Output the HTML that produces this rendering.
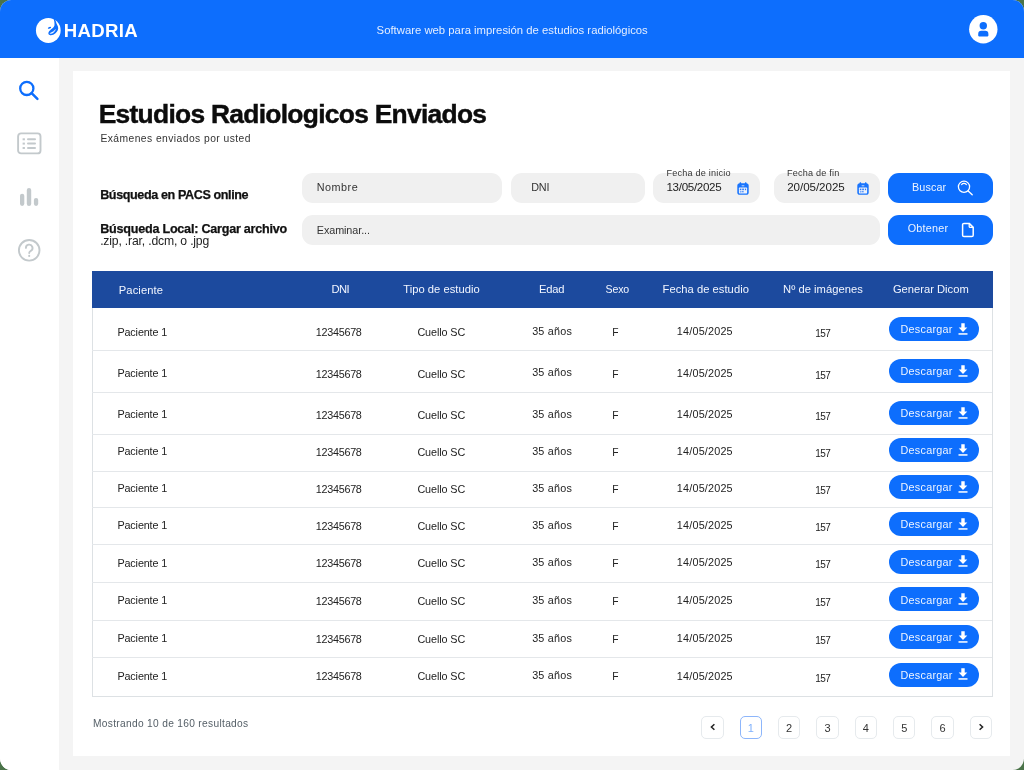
<!DOCTYPE html>
<html lang="es">
<head>
<meta charset="utf-8">
<title>Hadria - Estudios Radiologicos Enviados</title>
<style>
*{box-sizing:border-box;margin:0;padding:0}
html,body{width:1024px;height:770px;overflow:hidden;background:#4a7349;font-family:"Liberation Sans",sans-serif;}
#app{will-change:transform;position:absolute;left:0;top:0;width:1024px;height:770px;border-radius:11.5px;overflow:hidden;background:#f4f4f4;}
.a{position:absolute}
.t{position:absolute;white-space:nowrap;line-height:1;color:#222}
#hdr{position:absolute;left:0;top:0;width:1024px;height:58px;background:#0d6efd}
#side{position:absolute;left:0;top:58px;width:59px;height:712px;background:#fff}
#card{position:absolute;left:73.1px;top:70.5px;width:936.9px;height:685.4px;background:#fff}
.inp{position:absolute;background:#f0f0f0;border-radius:11px}
.btn{position:absolute;background:#0d6efd;border-radius:11px}
#thead{position:absolute;left:92px;top:271.4px;width:900.8px;height:36.5px;background:#1c4a9e}
#tbody{position:absolute;left:91.5px;top:308px;width:901.5px;height:388.7px;border:1px solid #dde1e4;border-top:none}
.rl{position:absolute;left:92px;width:900px;height:1px;background:#e4e7ea}
.dl{position:absolute;left:889px;width:90.4px;height:24px;border-radius:12px;background:#0d6efd}
.pg{position:absolute;top:716.3px;width:22.4px;height:22.4px;border:1px solid #e6eaed;border-radius:5px;background:#fff}
.pn{position:absolute;width:22.4px;text-align:center;font-size:11px;line-height:1}
svg{position:absolute;overflow:visible}
</style>
</head>
<body>
<div id="app">
<div id="hdr"></div>
<div id="side"></div>
<div id="card"></div>

<!-- header -->
<svg id="logo" style="left:36px;top:17.7px" width="25" height="25" viewBox="0 0 25 25">
<ellipse cx="12.3" cy="12.45" rx="12.35" ry="12.55" fill="#fff"/>
<path d="M17.4 0.3 C18.3 2.6 18.6 5.0 18.5 7.2 C18.3 8.4 17.4 9.4 16.2 10.4 C14.8 11.5 13.4 12.6 12.7 14.0 C12.0 15.4 12.4 16.6 13.6 17.1 C15.4 17.8 17.8 16.8 19.5 15.3 C21.6 13.4 22.7 10.9 22.0 8.7 C21.6 7.4 20.9 6.4 20.5 5.4 C20.1 4.0 19.6 2.4 18.7 0.8 Z" fill="#0d6efd"/>
<path d="M13.8 15.5 C15.0 15.9 16.8 15.1 18.0 13.9 C18.8 13.1 19.3 12.2 19.4 11.4 C18.6 12.6 17.4 13.6 16.0 14.3 C15.2 14.7 14.4 15.0 13.8 15.5 Z" fill="#fff" stroke="#fff" stroke-width="0.35"/>
<ellipse cx="13.5" cy="9.8" rx="1.75" ry="0.8" transform="rotate(-22 13.5 9.8)" fill="#0d6efd"/>
</svg>
<div class="t" id="brand" style="left:63.75px;top:21.66px;font-size:18.6px;font-weight:bold;color:#fff;letter-spacing:0.300px;">HADRIA</div>
<div class="t" id="tagline" style="left:376.60px;top:25.03px;font-size:11.3px;color:#e4eeff;letter-spacing:0.010px;">Software web para impresión de estudios radiológicos</div>
<svg id="avatar" style="left:969.3px;top:14.8px" width="29" height="29" viewBox="0 0 29 29">
<circle cx="14.3" cy="14.3" r="14.2" fill="#fff"/>
<circle cx="14.3" cy="10.8" r="3.7" fill="#0d6efd"/>
<path d="M9.2 20.6 v-1.6 a3.2 3.2 0 0 1 3.2 -3.2 h3.8 a3.2 3.2 0 0 1 3.2 3.2 v1.6 a0.8 0.8 0 0 1 -0.8 0.8 h-8.6 a0.8 0.8 0 0 1 -0.8 -0.8 z" fill="#0d6efd"/>
</svg>
<!-- sidebar -->
<svg id="ic-search" style="left:16.8px;top:77.6px" width="24" height="24" viewBox="0 0 24 24">
<circle cx="9.8" cy="10.4" r="6.6" fill="none" stroke="#0d6efd" stroke-width="2.3"/>
<path d="M14.6 15.2 L20.4 20.8" stroke="#0d6efd" stroke-width="2.5" stroke-linecap="round"/>
</svg>
<svg id="ic-list" style="left:17px;top:132px" width="25" height="23" viewBox="0 0 25 23">
<rect x="1.1" y="1.4" width="22.4" height="20" rx="3" fill="none" stroke="#c3c9cc" stroke-width="1.9"/>
<g fill="#c3c9cc"><rect x="5.6" y="6.3" width="2.3" height="2"/><rect x="5.6" y="10.6" width="2.3" height="2"/><rect x="5.6" y="15" width="2.3" height="2"/>
<rect x="10" y="6.3" width="9" height="2" rx="1"/><rect x="10" y="10.6" width="9" height="2" rx="1"/><rect x="10" y="15" width="9" height="2" rx="1"/></g>
</svg>
<svg id="ic-bars" style="left:19px;top:187px" width="20" height="20" viewBox="0 0 20 20">
<g fill="#c3c9cc"><rect x="1" y="6.7" width="4.3" height="12.2" rx="2.1"/><rect x="7.8" y="0.9" width="4.4" height="18" rx="2.2"/><rect x="14.9" y="11" width="4.3" height="7.9" rx="2.1"/></g>
</svg>
<svg id="ic-help" style="left:17px;top:238px" width="25" height="25" viewBox="0 0 25 25">
<circle cx="12.2" cy="12.3" r="10.3" fill="none" stroke="#c3c9cc" stroke-width="1.9"/>
<path d="M8.9 9.9 a3.3 3.3 0 1 1 4.9 2.9 c-1 .6 -1.6 1.1 -1.6 2.3" fill="none" stroke="#c3c9cc" stroke-width="1.9" stroke-linecap="round"/>
<circle cx="12.2" cy="17.9" r="1.05" fill="#c3c9cc"/>
</svg>
<div class="t" id="title" style="left:98.70px;top:101.25px;font-size:26.4px;font-weight:bold;color:#0c0c0c;letter-spacing:-0.716px;-webkit-text-stroke:0.45px #0c0c0c;">Estudios Radiologicos Enviados</div>
<div class="t" id="subtitle" style="left:100.45px;top:133.78px;font-size:10.3px;color:#333;letter-spacing:0.442px;">Exámenes enviados por usted</div>
<!-- form -->
<div class="t" id="lbl1" style="left:100.15px;top:189.13px;font-size:12.6px;font-weight:bold;color:#111;letter-spacing:-0.397px;-webkit-text-stroke:0.25px #111;">Búsqueda en PACS online</div>
<div class="t" id="lbl2" style="left:100.15px;top:223.38px;font-size:12.6px;font-weight:bold;color:#111;letter-spacing:-0.233px;-webkit-text-stroke:0.25px #111;">Búsqueda Local: Cargar archivo</div>
<div class="t" id="lbl3" style="left:100.15px;top:235.07px;font-size:12.2px;letter-spacing:-0.174px;">.zip, .rar, .dcm, o .jpg</div>
<div class="inp" style="left:302px;top:173.3px;width:199.6px;height:29.8px"></div>
<div class="inp" style="left:510.6px;top:173.3px;width:134.6px;height:29.8px"></div>
<div class="inp" style="left:653.2px;top:173.3px;width:106.7px;height:29.8px"></div>
<div class="inp" style="left:773.6px;top:173.3px;width:106.4px;height:29.8px"></div>
<div class="inp" style="left:302px;top:214.9px;width:578px;height:29.8px"></div>
<div class="t" id="in-nombre" style="left:316.75px;top:182.36px;font-size:10.8px;color:#333;letter-spacing:0.500px;">Nombre</div>
<div class="t" id="in-dni" style="left:531.15px;top:181.96px;font-size:10.8px;color:#333;letter-spacing:-0.125px;">DNI</div>
<div class="t" id="in-exam" style="left:316.75px;top:224.86px;font-size:10.8px;color:#333;letter-spacing:-0.075px;">Examinar...</div>
<div class="t" id="f1l" style="left:666.45px;top:169.10px;font-size:9.1px;color:#333;letter-spacing:0.218px;">Fecha de inicio</div>
<div class="t" id="f1v" style="left:666.45px;top:180.78px;font-size:11.6px;letter-spacing:-0.309px;">13/05/2025</div>
<div class="t" id="f2l" style="left:786.95px;top:169.10px;font-size:9.1px;color:#333;letter-spacing:0.205px;">Fecha de fin</div>
<div class="t" id="f2v" style="left:787.20px;top:180.78px;font-size:11.6px;letter-spacing:-0.055px;">20/05/2025</div>
<svg class="cal" style="left:737.2px;top:181.6px" width="12" height="13" viewBox="0 0 12 13">
<rect x="2.6" y="0.2" width="1.6" height="2.4" rx="0.7" fill="#0d6efd"/><rect x="7.9" y="0.2" width="1.6" height="2.4" rx="0.7" fill="#0d6efd"/>
<rect x="0.3" y="1.2" width="11.4" height="11.6" rx="2.6" fill="#1a75fd"/>
<rect x="1.9" y="5.6" width="8.2" height="5.8" rx="0.6" fill="#eef3fb"/>
<ellipse cx="6" cy="3.8" rx="1.6" ry="0.5" fill="#cfe0fd"/>
<g fill="#2b7bfd"><rect x="2.8" y="6.6" width="1.2" height="1.6"/><rect x="4.6" y="6.6" width="1.2" height="1.6"/><rect x="6.1" y="6.6" width="1.0" height="1.6"/><rect x="8" y="6.6" width="1.1" height="1.6"/>
<rect x="2.8" y="9.2" width="1.2" height="1.2" rx="0.6"/><rect x="4.4" y="9.3" width="2.4" height="1" rx="0.5"/></g>
</svg>
<svg class="cal" style="left:857.4px;top:181.6px" width="12" height="13" viewBox="0 0 12 13">
<rect x="2.6" y="0.2" width="1.6" height="2.4" rx="0.7" fill="#0d6efd"/><rect x="7.9" y="0.2" width="1.6" height="2.4" rx="0.7" fill="#0d6efd"/>
<rect x="0.3" y="1.2" width="11.4" height="11.6" rx="2.6" fill="#1a75fd"/>
<rect x="1.9" y="5.6" width="8.2" height="5.8" rx="0.6" fill="#eef3fb"/>
<ellipse cx="6" cy="3.8" rx="1.6" ry="0.5" fill="#cfe0fd"/>
<g fill="#2b7bfd"><rect x="2.8" y="6.6" width="1.2" height="1.6"/><rect x="4.6" y="6.6" width="1.2" height="1.6"/><rect x="6.1" y="6.6" width="1.0" height="1.6"/><rect x="8" y="6.6" width="1.1" height="1.6"/>
<rect x="2.8" y="9.2" width="1.2" height="1.2" rx="0.6"/><rect x="4.4" y="9.3" width="2.4" height="1" rx="0.5"/></g>
</svg>
<div class="btn" style="left:888px;top:173.3px;width:104.8px;height:29.8px"></div>
<div class="btn" style="left:888px;top:214.8px;width:104.8px;height:29.8px"></div>
<div class="t" id="b-buscar" style="left:912.00px;top:181.96px;font-size:10.8px;color:#eef4ff;letter-spacing:0.100px;">Buscar</div>
<div class="t" id="b-obtener" style="left:907.70px;top:222.66px;font-size:10.8px;color:#eef4ff;letter-spacing:0.250px;">Obtener</div>
<svg id="ic-bsearch" style="left:956px;top:179px" width="18" height="18" viewBox="0 0 18 18">
<circle cx="8" cy="7.8" r="5.6" fill="none" stroke="#fff" stroke-width="1.3"/>
<path d="M12.2 12 L16.2 15.8" stroke="#fff" stroke-width="1.4" stroke-linecap="round"/>
<path d="M5.6 5.6 a3 3 0 0 1 4.8 0" stroke="#fff" stroke-width="1.1" fill="none" stroke-linecap="round"/>
</svg>
<svg id="ic-file" style="left:961px;top:222px" width="14" height="16" viewBox="0 0 14 16">
<path d="M1.6 2.8 a1.4 1.4 0 0 1 1.4 -1.4 h5.2 l4 4 v7.8 a1.4 1.4 0 0 1 -1.4 1.4 h-7.8 a1.4 1.4 0 0 1 -1.4 -1.4 z" fill="none" stroke="#fff" stroke-width="1.5" stroke-linejoin="round"/>
<path d="M8.2 1.4 v3 a1 1 0 0 0 1 1 h3" fill="none" stroke="#fff" stroke-width="1.3"/>
</svg>
<!-- table -->
<div id="tbody"></div>
<div id="thead"></div>
<div class="t" id="h-pac" style="left:118.75px;top:285.02px;font-size:11.2px;color:#f2f6ff;letter-spacing:0.107px;">Paciente</div>
<div class="t" id="h-dni" style="left:331.45px;top:283.72px;font-size:11.2px;color:#f2f6ff;letter-spacing:-0.500px;">DNI</div>
<div class="t" id="h-tipo" style="left:403.35px;top:283.72px;font-size:11.2px;color:#f2f6ff;letter-spacing:0.015px;">Tipo de estudio</div>
<div class="t" id="h-edad" style="left:538.95px;top:283.72px;font-size:11.2px;color:#f2f6ff;letter-spacing:-0.165px;">Edad</div>
<div class="t" id="h-sexo" style="left:605.60px;top:284.23px;font-size:10.6px;color:#f2f6ff;letter-spacing:-0.200px;">Sexo</div>
<div class="t" id="h-fecha" style="left:662.55px;top:283.72px;font-size:11.2px;color:#f2f6ff;letter-spacing:0.033px;">Fecha de estudio</div>
<div class="t" id="h-nimg" style="left:783.05px;top:283.72px;font-size:11.2px;color:#f2f6ff;letter-spacing:0.037px;">Nº de imágenes</div>
<div class="t" id="h-gen" style="left:892.90px;top:283.72px;font-size:11.2px;color:#f2f6ff;">Generar Dicom</div>
<div class="rl" style="top:350px"></div>
<div class="rl" style="top:392px"></div>
<div class="rl" style="top:434px"></div>
<div class="rl" style="top:471px"></div>
<div class="rl" style="top:507px"></div>
<div class="rl" style="top:544px"></div>
<div class="rl" style="top:582px"></div>
<div class="rl" style="top:619.5px"></div>
<div class="rl" style="top:657px"></div>
<div class="t" id="r1-pac" style="left:117.45px;top:326.76px;font-size:10.8px;letter-spacing:-0.141px;">Paciente 1</div>
<div class="t" id="r1-dni" style="left:315.85px;top:327.46px;font-size:10.8px;letter-spacing:-0.287px;">12345678</div>
<div class="t" id="r1-tipo" style="left:417.40px;top:327.46px;font-size:10.8px;letter-spacing:-0.091px;">Cuello SC</div>
<div class="t" id="r1-edad" style="left:532.15px;top:326.26px;font-size:10.8px;letter-spacing:0.207px;">35 años</div>
<div class="t" id="r1-sexo" style="left:612.35px;top:327.88px;font-size:10.3px;">F</div>
<div class="t" id="r1-fecha" style="left:676.85px;top:326.16px;font-size:10.8px;letter-spacing:0.193px;">14/05/2025</div>
<div class="t" id="r1-nimg" style="left:815.25px;top:328.83px;font-size:10.0px;letter-spacing:-0.600px;">157</div>
<div class="dl" style="top:316.80px"></div>
<div class="t" id="r1-dl" style="left:900.55px;top:323.96px;font-size:10.8px;color:#eef4ff;letter-spacing:0.249px;">Descargar</div>
<svg style="left:958.3px;top:322.60px" width="10" height="12" viewBox="0 0 10 12"><path d="M3.3 0.3 h3.4 v4.3 h2.6 L5 8.9 L0.7 4.6 h2.6 z" fill="#fff"/><rect x="0.5" y="10.2" width="9" height="1.5" fill="#fff"/></svg>
<div class="t" id="r2-pac" style="left:117.45px;top:367.86px;font-size:10.8px;letter-spacing:-0.141px;">Paciente 1</div>
<div class="t" id="r2-dni" style="left:315.85px;top:369.06px;font-size:10.8px;letter-spacing:-0.287px;">12345678</div>
<div class="t" id="r2-tipo" style="left:417.40px;top:369.06px;font-size:10.8px;letter-spacing:-0.091px;">Cuello SC</div>
<div class="t" id="r2-edad" style="left:532.15px;top:367.36px;font-size:10.8px;letter-spacing:0.207px;">35 años</div>
<div class="t" id="r2-sexo" style="left:612.35px;top:369.98px;font-size:10.3px;">F</div>
<div class="t" id="r2-fecha" style="left:676.85px;top:367.76px;font-size:10.8px;letter-spacing:0.193px;">14/05/2025</div>
<div class="t" id="r2-nimg" style="left:815.25px;top:370.94px;font-size:10.0px;letter-spacing:-0.600px;">157</div>
<div class="dl" style="top:358.80px"></div>
<div class="t" id="r2-dl" style="left:900.55px;top:365.96px;font-size:10.8px;color:#eef4ff;letter-spacing:0.249px;">Descargar</div>
<svg style="left:958.3px;top:364.60px" width="10" height="12" viewBox="0 0 10 12"><path d="M3.3 0.3 h3.4 v4.3 h2.6 L5 8.9 L0.7 4.6 h2.6 z" fill="#fff"/><rect x="0.5" y="10.2" width="9" height="1.5" fill="#fff"/></svg>
<div class="t" id="r3-pac" style="left:117.45px;top:409.26px;font-size:10.8px;letter-spacing:-0.141px;">Paciente 1</div>
<div class="t" id="r3-dni" style="left:315.85px;top:409.96px;font-size:10.8px;letter-spacing:-0.287px;">12345678</div>
<div class="t" id="r3-tipo" style="left:417.40px;top:409.96px;font-size:10.8px;letter-spacing:-0.091px;">Cuello SC</div>
<div class="t" id="r3-edad" style="left:532.15px;top:408.76px;font-size:10.8px;letter-spacing:0.207px;">35 años</div>
<div class="t" id="r3-sexo" style="left:612.35px;top:410.88px;font-size:10.3px;">F</div>
<div class="t" id="r3-fecha" style="left:676.85px;top:408.66px;font-size:10.8px;letter-spacing:0.193px;">14/05/2025</div>
<div class="t" id="r3-nimg" style="left:815.25px;top:411.83px;font-size:10.0px;letter-spacing:-0.600px;">157</div>
<div class="dl" style="top:400.75px"></div>
<div class="t" id="r3-dl" style="left:900.55px;top:407.91px;font-size:10.8px;color:#eef4ff;letter-spacing:0.249px;">Descargar</div>
<svg style="left:958.3px;top:406.55px" width="10" height="12" viewBox="0 0 10 12"><path d="M3.3 0.3 h3.4 v4.3 h2.6 L5 8.9 L0.7 4.6 h2.6 z" fill="#fff"/><rect x="0.5" y="10.2" width="9" height="1.5" fill="#fff"/></svg>
<div class="t" id="r4-pac" style="left:117.45px;top:446.26px;font-size:10.8px;letter-spacing:-0.141px;">Paciente 1</div>
<div class="t" id="r4-dni" style="left:315.85px;top:446.96px;font-size:10.8px;letter-spacing:-0.287px;">12345678</div>
<div class="t" id="r4-tipo" style="left:417.40px;top:446.96px;font-size:10.8px;letter-spacing:-0.091px;">Cuello SC</div>
<div class="t" id="r4-edad" style="left:532.15px;top:445.76px;font-size:10.8px;letter-spacing:0.207px;">35 años</div>
<div class="t" id="r4-sexo" style="left:612.35px;top:447.88px;font-size:10.3px;">F</div>
<div class="t" id="r4-fecha" style="left:676.85px;top:445.66px;font-size:10.8px;letter-spacing:0.193px;">14/05/2025</div>
<div class="t" id="r4-nimg" style="left:815.25px;top:448.83px;font-size:10.0px;letter-spacing:-0.600px;">157</div>
<div class="dl" style="top:437.80px"></div>
<div class="t" id="r4-dl" style="left:900.55px;top:444.96px;font-size:10.8px;color:#eef4ff;letter-spacing:0.249px;">Descargar</div>
<svg style="left:958.3px;top:443.60px" width="10" height="12" viewBox="0 0 10 12"><path d="M3.3 0.3 h3.4 v4.3 h2.6 L5 8.9 L0.7 4.6 h2.6 z" fill="#fff"/><rect x="0.5" y="10.2" width="9" height="1.5" fill="#fff"/></svg>
<div class="t" id="r5-pac" style="left:117.45px;top:483.46px;font-size:10.8px;letter-spacing:-0.141px;">Paciente 1</div>
<div class="t" id="r5-dni" style="left:315.85px;top:483.66px;font-size:10.8px;letter-spacing:-0.287px;">12345678</div>
<div class="t" id="r5-tipo" style="left:417.40px;top:483.66px;font-size:10.8px;letter-spacing:-0.091px;">Cuello SC</div>
<div class="t" id="r5-edad" style="left:532.15px;top:482.96px;font-size:10.8px;letter-spacing:0.207px;">35 años</div>
<div class="t" id="r5-sexo" style="left:612.35px;top:485.08px;font-size:10.3px;">F</div>
<div class="t" id="r5-fecha" style="left:676.85px;top:482.86px;font-size:10.8px;letter-spacing:0.193px;">14/05/2025</div>
<div class="t" id="r5-nimg" style="left:815.25px;top:485.54px;font-size:10.0px;letter-spacing:-0.600px;">157</div>
<div class="dl" style="top:474.80px"></div>
<div class="t" id="r5-dl" style="left:900.55px;top:481.96px;font-size:10.8px;color:#eef4ff;letter-spacing:0.249px;">Descargar</div>
<svg style="left:958.3px;top:480.60px" width="10" height="12" viewBox="0 0 10 12"><path d="M3.3 0.3 h3.4 v4.3 h2.6 L5 8.9 L0.7 4.6 h2.6 z" fill="#fff"/><rect x="0.5" y="10.2" width="9" height="1.5" fill="#fff"/></svg>
<div class="t" id="r6-pac" style="left:117.45px;top:520.06px;font-size:10.8px;letter-spacing:-0.141px;">Paciente 1</div>
<div class="t" id="r6-dni" style="left:315.85px;top:520.76px;font-size:10.8px;letter-spacing:-0.287px;">12345678</div>
<div class="t" id="r6-tipo" style="left:417.40px;top:520.76px;font-size:10.8px;letter-spacing:-0.091px;">Cuello SC</div>
<div class="t" id="r6-edad" style="left:532.15px;top:520.06px;font-size:10.8px;letter-spacing:0.207px;">35 años</div>
<div class="t" id="r6-sexo" style="left:612.35px;top:521.68px;font-size:10.3px;">F</div>
<div class="t" id="r6-fecha" style="left:676.85px;top:519.96px;font-size:10.8px;letter-spacing:0.193px;">14/05/2025</div>
<div class="t" id="r6-nimg" style="left:815.25px;top:522.63px;font-size:10.0px;letter-spacing:-0.600px;">157</div>
<div class="dl" style="top:511.80px"></div>
<div class="t" id="r6-dl" style="left:900.55px;top:518.96px;font-size:10.8px;color:#eef4ff;letter-spacing:0.249px;">Descargar</div>
<svg style="left:958.3px;top:517.60px" width="10" height="12" viewBox="0 0 10 12"><path d="M3.3 0.3 h3.4 v4.3 h2.6 L5 8.9 L0.7 4.6 h2.6 z" fill="#fff"/><rect x="0.5" y="10.2" width="9" height="1.5" fill="#fff"/></svg>
<div class="t" id="r7-pac" style="left:117.45px;top:557.86px;font-size:10.8px;letter-spacing:-0.141px;">Paciente 1</div>
<div class="t" id="r7-dni" style="left:315.85px;top:558.06px;font-size:10.8px;letter-spacing:-0.287px;">12345678</div>
<div class="t" id="r7-tipo" style="left:417.40px;top:558.06px;font-size:10.8px;letter-spacing:-0.091px;">Cuello SC</div>
<div class="t" id="r7-edad" style="left:532.15px;top:557.36px;font-size:10.8px;letter-spacing:0.207px;">35 años</div>
<div class="t" id="r7-sexo" style="left:612.35px;top:558.98px;font-size:10.3px;">F</div>
<div class="t" id="r7-fecha" style="left:676.85px;top:557.26px;font-size:10.8px;letter-spacing:0.193px;">14/05/2025</div>
<div class="t" id="r7-nimg" style="left:815.25px;top:559.94px;font-size:10.0px;letter-spacing:-0.600px;">157</div>
<div class="dl" style="top:549.50px"></div>
<div class="t" id="r7-dl" style="left:900.55px;top:556.66px;font-size:10.8px;color:#eef4ff;letter-spacing:0.249px;">Descargar</div>
<svg style="left:958.3px;top:555.30px" width="10" height="12" viewBox="0 0 10 12"><path d="M3.3 0.3 h3.4 v4.3 h2.6 L5 8.9 L0.7 4.6 h2.6 z" fill="#fff"/><rect x="0.5" y="10.2" width="9" height="1.5" fill="#fff"/></svg>
<div class="t" id="r8-pac" style="left:117.45px;top:595.16px;font-size:10.8px;letter-spacing:-0.141px;">Paciente 1</div>
<div class="t" id="r8-dni" style="left:315.85px;top:595.86px;font-size:10.8px;letter-spacing:-0.287px;">12345678</div>
<div class="t" id="r8-tipo" style="left:417.40px;top:595.86px;font-size:10.8px;letter-spacing:-0.091px;">Cuello SC</div>
<div class="t" id="r8-edad" style="left:532.15px;top:594.66px;font-size:10.8px;letter-spacing:0.207px;">35 años</div>
<div class="t" id="r8-sexo" style="left:612.35px;top:597.28px;font-size:10.3px;">F</div>
<div class="t" id="r8-fecha" style="left:676.85px;top:595.06px;font-size:10.8px;letter-spacing:0.193px;">14/05/2025</div>
<div class="t" id="r8-nimg" style="left:815.25px;top:597.74px;font-size:10.0px;letter-spacing:-0.600px;">157</div>
<div class="dl" style="top:587.30px"></div>
<div class="t" id="r8-dl" style="left:900.55px;top:594.96px;font-size:10.8px;color:#eef4ff;letter-spacing:0.249px;">Descargar</div>
<svg style="left:958.3px;top:593.10px" width="10" height="12" viewBox="0 0 10 12"><path d="M3.3 0.3 h3.4 v4.3 h2.6 L5 8.9 L0.7 4.6 h2.6 z" fill="#fff"/><rect x="0.5" y="10.2" width="9" height="1.5" fill="#fff"/></svg>
<div class="t" id="r9-pac" style="left:117.45px;top:633.06px;font-size:10.8px;letter-spacing:-0.141px;">Paciente 1</div>
<div class="t" id="r9-dni" style="left:315.85px;top:633.76px;font-size:10.8px;letter-spacing:-0.287px;">12345678</div>
<div class="t" id="r9-tipo" style="left:417.40px;top:633.76px;font-size:10.8px;letter-spacing:-0.091px;">Cuello SC</div>
<div class="t" id="r9-edad" style="left:532.15px;top:633.06px;font-size:10.8px;letter-spacing:0.207px;">35 años</div>
<div class="t" id="r9-sexo" style="left:612.35px;top:634.68px;font-size:10.3px;">F</div>
<div class="t" id="r9-fecha" style="left:676.85px;top:632.96px;font-size:10.8px;letter-spacing:0.193px;">14/05/2025</div>
<div class="t" id="r9-nimg" style="left:815.25px;top:635.63px;font-size:10.0px;letter-spacing:-0.600px;">157</div>
<div class="dl" style="top:624.80px"></div>
<div class="t" id="r9-dl" style="left:900.55px;top:631.96px;font-size:10.8px;color:#eef4ff;letter-spacing:0.249px;">Descargar</div>
<svg style="left:958.3px;top:630.60px" width="10" height="12" viewBox="0 0 10 12"><path d="M3.3 0.3 h3.4 v4.3 h2.6 L5 8.9 L0.7 4.6 h2.6 z" fill="#fff"/><rect x="0.5" y="10.2" width="9" height="1.5" fill="#fff"/></svg>
<div class="t" id="r10-pac" style="left:117.45px;top:670.66px;font-size:10.8px;letter-spacing:-0.141px;">Paciente 1</div>
<div class="t" id="r10-dni" style="left:315.85px;top:671.36px;font-size:10.8px;letter-spacing:-0.287px;">12345678</div>
<div class="t" id="r10-tipo" style="left:417.40px;top:671.36px;font-size:10.8px;letter-spacing:-0.091px;">Cuello SC</div>
<div class="t" id="r10-edad" style="left:532.15px;top:670.16px;font-size:10.8px;letter-spacing:0.207px;">35 años</div>
<div class="t" id="r10-sexo" style="left:612.35px;top:672.28px;font-size:10.3px;">F</div>
<div class="t" id="r10-fecha" style="left:676.85px;top:671.06px;font-size:10.8px;letter-spacing:0.193px;">14/05/2025</div>
<div class="t" id="r10-nimg" style="left:815.25px;top:673.74px;font-size:10.0px;letter-spacing:-0.600px;">157</div>
<div class="dl" style="top:662.60px"></div>
<div class="t" id="r10-dl" style="left:900.55px;top:669.76px;font-size:10.8px;color:#eef4ff;letter-spacing:0.249px;">Descargar</div>
<svg style="left:958.3px;top:668.40px" width="10" height="12" viewBox="0 0 10 12"><path d="M3.3 0.3 h3.4 v4.3 h2.6 L5 8.9 L0.7 4.6 h2.6 z" fill="#fff"/><rect x="0.5" y="10.2" width="9" height="1.5" fill="#fff"/></svg>
<div class="t" id="mostr" style="left:93.05px;top:718.87px;font-size:10.2px;color:#566068;letter-spacing:0.310px;">Mostrando 10 de 160 resultados</div>
<div class="pg" style="left:701.25px;"></div>
<div class="pg" style="left:739.50px;border:1.3px solid #8db6fb;"></div>
<div class="pg" style="left:777.90px;"></div>
<div class="pg" style="left:816.25px;"></div>
<div class="pg" style="left:854.60px;"></div>
<div class="pg" style="left:893.00px;"></div>
<div class="pg" style="left:931.30px;"></div>
<div class="pg" style="left:969.70px;"></div>
<svg style="left:708.6px;top:723.4px" width="8" height="8" viewBox="0 0 8 8"><path d="M5.4 1.2 L2.4 4 L5.4 6.8" fill="none" stroke="#222" stroke-width="1.5"/></svg>
<svg style="left:977.2px;top:723.4px" width="8" height="8" viewBox="0 0 8 8"><path d="M2.6 1.2 L5.6 4 L2.6 6.8" fill="none" stroke="#222" stroke-width="1.5"/></svg>
<div class="pn" id="p1" style="left:739.50px;top:723.3px;color:#7fb0fc">1</div>
<div class="pn" id="p2" style="left:777.90px;top:723.3px;color:#333">2</div>
<div class="pn" id="p3" style="left:816.25px;top:723.3px;color:#333">3</div>
<div class="pn" id="p4" style="left:854.60px;top:723.3px;color:#333">4</div>
<div class="pn" id="p5" style="left:893.00px;top:723.3px;color:#333">5</div>
<div class="pn" id="p6" style="left:931.30px;top:723.3px;color:#333">6</div>
</div>
</body>
</html>
